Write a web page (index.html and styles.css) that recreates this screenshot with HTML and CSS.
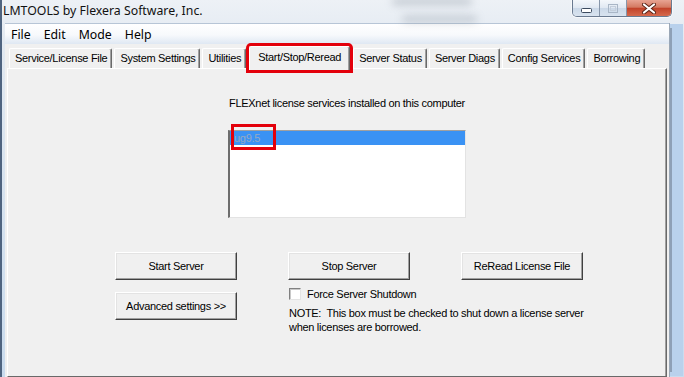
FILE: index.html
```html
<!DOCTYPE html>
<html lang="en">
<head>
  <meta charset="UTF-8" />
  <title>LMTOOLS by Flexera Software, Inc.</title>
  <link rel="stylesheet" href="styles.css">
</head>
<body>
  <div class="window">
    <!-- Title bar -->
    <div class="titlebar">
      <span class="title">LMTOOLS by Flexera Software, Inc.</span>
      <span class="blur blur-a"></span>
      <span class="blur blur-b"></span>
      <div class="caption-btns">
        <span class="cap cap-min">
          <svg width="11" height="5" viewBox="0 0 11 5"><rect x="0.5" y="0.5" width="10" height="4" rx="1" fill="#fff" stroke="#3b4a5e"/></svg>
        </span>
        <span class="cap cap-max">
          <svg width="10" height="9" viewBox="0 0 10 9"><rect x="0.5" y="0.5" width="9" height="8" fill="none" stroke="#a9b6c6"/><rect x="2.5" y="2.5" width="5" height="4" fill="none" stroke="#c4cedb"/></svg>
        </span>
        <span class="cap cap-close">
          <svg width="14" height="11" viewBox="0 0 14 11"><path d="M2 1.5 L12 9.5 M12 1.5 L2 9.5" stroke="#5a2418" stroke-width="4" stroke-linecap="round"/><path d="M2 1.5 L12 9.5 M12 1.5 L2 9.5" stroke="#fff" stroke-width="2.2" stroke-linecap="round"/></svg>
        </span>
      </div>
    </div>

    <div class="client">
      <div class="menubar">
        <span class="menu-item">File</span>
        <span class="menu-item">Edit</span>
        <span class="menu-item">Mode</span>
        <span class="menu-item">Help</span>
      </div>

      <div class="tabs">
        <span class="tab">Service/License File</span>
        <span class="tab">System Settings</span>
        <span class="tab">Utilities</span>
        <span class="tab active">Start/Stop/Reread</span>
        <span class="tab">Server Status</span>
        <span class="tab">Server Diags</span>
        <span class="tab">Config Services</span>
        <span class="tab">Borrowing</span>
      </div>

      <div class="panel">
        <div class="services">
          <p class="caption">FLEXnet license services installed on this computer</p>
          <div class="listbox">
            <div class="list-item selected">ug9.5</div>
            <span class="mark"></span>
          </div>
        </div>

        <div class="controls">
          <button class="btn">Start Server</button>
          <button class="btn">Stop Server</button>
          <button class="btn">ReRead License File</button>
          <button class="btn btn-advanced">Advanced settings &gt;&gt;</button>
          <div class="shutdown">
            <label class="check"><span class="box"></span>Force Server Shutdown</label>
            <p class="note">NOTE:&nbsp; This box must be checked to shut down a license server<br>when licenses are borrowed.</p>
          </div>
        </div>
      </div>
    </div>
  </div>
</body>
</html>
```

FILE: styles.css
```css
* {
  margin: 0;
  padding: 0;
  box-sizing: border-box;
}

body {
  width: 684px;
  height: 377px;
  overflow: hidden;
  font-family: "Liberation Sans", Arial, sans-serif;
  font-size: 11px;
  letter-spacing: -0.3px;
  color: #000;
  background: #fff;
}

.window {
  height: 377px;
  display: flex;
  flex-direction: column;
  padding: 0 0 0 3px;
  background: linear-gradient(180deg, #edf1f6 0%, #e2e9f1 12%, #c9dbee 100%);
  border-left: 2px solid #4f6480;
  position: relative;
}

/* Title bar */
.titlebar {
  height: 23px;
  display: flex;
  justify-content: space-between;
  align-items: flex-start;
  padding-right: 12px;
}

.title {
  font-family: "Noto Sans", "Open Sans", sans-serif;
  font-size: 12.3px;
  letter-spacing: 0;
  line-height: 22px;
  color: #111;
  margin-left: -2px;
}

.blur {
  position: absolute;
  background: #6f7b88;
  filter: blur(4px);
  opacity: 0.35;
  border-radius: 4px;
}

.blur-a {
  left: 390px;
  top: -2px;
  width: 80px;
  height: 7px;
}

.blur-b {
  left: 400px;
  top: 16px;
  width: 75px;
  height: 6px;
}

.caption-btns {
  display: flex;
  border: 1px solid #6a7a90;
  border-top: none;
  border-radius: 0 0 5px 5px;
  overflow: hidden;
  box-shadow: 0 0 0 1px rgba(255, 255, 255, 0.6);
}

.cap {
  height: 16px;
  display: flex;
  align-items: center;
  justify-content: center;
  background: linear-gradient(180deg, #f4f7fb 0%, #e0e8f2 50%, #cbd8e8 51%, #d8e3ef 100%);
}

.cap-min {
  width: 27px;
  border-right: 1px solid #8796aa;
  padding-top: 5px;
}

.cap-max {
  width: 27px;
  border-right: 1px solid #8796aa;
}

.cap-close {
  width: 44px;
  background: linear-gradient(180deg, #e8a493 0%, #d47a62 45%, #c2432a 52%, #d5694c 100%);
}

/* Client area */
.client {
  flex: 1;
  display: flex;
  flex-direction: column;
  background: #f0f0f0;
  margin-right: 14px;
  border-right: 1px solid #9aa7b6;
  box-shadow: 7px 0 0 -5px #8ea0b6, 14px 0 0 -1px #b9d1ec;
}

.menubar {
  height: 21px;
  display: flex;
  align-items: center;
  background: linear-gradient(180deg, #ffffff 0%, #f7f9fc 55%, #dfe8f3 100%);
  border-top: 1px solid #b7c5d6;
  font-family: "Noto Sans", "Open Sans", sans-serif;
  font-size: 12.3px;
  letter-spacing: 0;
}

.menu-item {
  padding: 0 7px 0 6px;
}

/* Tabs */
.tabs {
  height: 24px;
  display: flex;
  align-items: flex-end;
  gap: 2px;
  padding-left: 4px;
}

.tab {
  height: 20px;
  padding: 0 4px 1px 5px;
  display: flex;
  align-items: center;
  border-top: 1px solid #fff;
  border-left: 1px solid #fff;
  border-right: 1px solid #696969;
  border-radius: 2px 2px 0 0;
  box-shadow: inset -1px 0 0 #a0a0a0;
  white-space: nowrap;
}

.tab.active {
  height: 24px;
  margin: 0 1px -2px 1px;
  padding: 0 8px 4px 8px;
  background: #f0f0f0;
  position: relative;
  z-index: 1;
  box-shadow: inset -1px 0 0 #a0a0a0, 0 0 0 3px #e3000b;
}

/* Panel */
.panel {
  flex: 1;
  margin: 0 2px 0 2px;
  border-top: 1px solid #fff;
  border-left: 1px solid #fff;
  border-right: 1px solid #696969;
  border-bottom: 1px solid #696969;
  box-shadow: inset -1px 0 0 #a0a0a0;
}

.services {
  padding-left: 220px;
}

.caption {
  margin-top: 28px;
  padding-left: 1px;
  line-height: 13px;
}

.listbox {
  margin-top: 20px;
  width: 238px;
  height: 88px;
  background: #fff;
  border-top: 1px solid #a0a0a0;
  border-left: 2px solid #6d6d6d;
  border-right: 1px solid #e3e3e3;
  border-bottom: 1px solid #e3e3e3;
  position: relative;
}

.list-item {
  height: 14px;
  line-height: 14px;
  padding-left: 4px;
}

.list-item.selected {
  background: #3a92f4;
  color: #94a9c4;
}

.mark {
  position: absolute;
  left: 1px;
  top: -7px;
  width: 45px;
  height: 26px;
  border: 3px solid #e3000b;
}

/* Buttons & options */
.controls {
  display: grid;
  grid-template-columns: repeat(3, 122px);
  column-gap: 51px;
  row-gap: 7px;
  margin: 34px 0 0 107px;
}

.btn {
  height: 28px;
  font-family: inherit;
  font-size: 11px;
  letter-spacing: -0.3px;
  color: #000;
  background: #f0f0f0;
  border: 1px solid;
  border-color: #fff #404040 #404040 #fff;
  box-shadow: inset -1px -1px 0 #a0a0a0, inset 1px 1px 0 #e3e3e3;
}

.btn-advanced {
  margin-top: 5px;
}

.shutdown {
  grid-column: 2 / span 2;
  padding-left: 1px;
}

.check {
  display: flex;
  align-items: center;
  height: 14px;
  gap: 6px;
}

.box {
  width: 12px;
  height: 12px;
  background: #fff;
  border-top: 1px solid #808080;
  border-left: 1px solid #808080;
  border-right: 1px solid #e3e3e3;
  border-bottom: 1px solid #e3e3e3;
  box-shadow: inset 1px 1px 0 #c8c8c8;
}

.note {
  margin-top: 5px;
  line-height: 14px;
  white-space: nowrap;
}
```
